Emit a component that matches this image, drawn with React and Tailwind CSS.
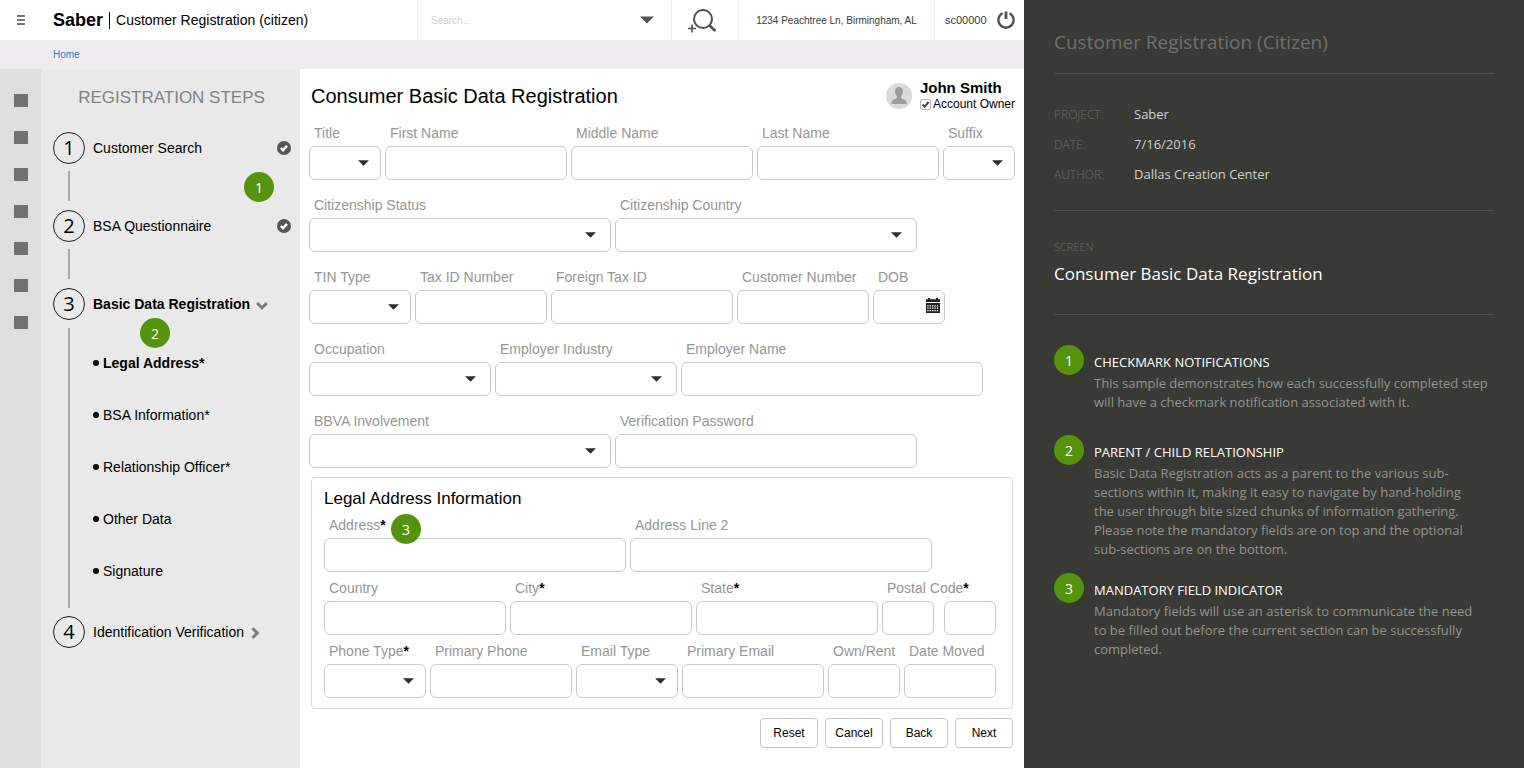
import { useState } from 'react';
import clsx from 'clsx';

function Caret({ className }) {
  return (
    <svg viewBox="0 0 12 6" className={clsx('pointer-events-none', className)} fill="currentColor" aria-hidden="true">
      <path d="M0 0h12L6 6z" />
    </svg>
  );
}

function Badge({ n, className }) {
  return (
    <span className={clsx('flex size-[30px] shrink-0 items-center justify-center rounded-full bg-[#55930d] pt-[2px] font-["Open_Sans",sans-serif] text-[14px] leading-none text-white', className)}>
      {n}
    </span>
  );
}

const boxClass = 'block h-[34px] w-full rounded-md border border-[#c9c9c9] bg-white px-2 text-sm text-gray-700 focus:outline-none focus:ring-1 focus:ring-gray-400';

function Field({ id, label, width, required, children }) {
  return (
    <div className={clsx('relative', width)}>
      <label htmlFor={id} className="mb-[3px] block pl-[5px] text-[14px] leading-5 whitespace-nowrap text-[#969696]">
        {label}{required && <span className="font-bold text-black">*</span>}
      </label>
      {children || <input id={id} type="text" className={boxClass} />}
    </div>
  );
}

function SelectField({ id, label, width, required, wide }) {
  return (
    <Field id={id} label={label} width={width} required={required}>
      <div className="relative">
        <select id={id} className={clsx(boxClass, 'appearance-none')}>
          <option value=""></option>
        </select>
        <Caret className={clsx('absolute top-[14px] h-[6px] w-[11px] text-[#2f2f2f]', wide ? 'right-[15px]' : 'right-3')} />
      </div>
    </Field>
  );
}

function Header() {
  return (
    <header className="flex h-10 items-stretch bg-white">
      <div className="flex w-[418px] items-center border-r border-[#ececec]">
        <button type="button" aria-label="Menu" className="ml-4 flex w-[10px] flex-col gap-[2px] px-px">
          <span className="h-[2px] bg-[#777]" />
          <span className="h-[2px] bg-[#777]" />
          <span className="h-[2px] bg-[#777]" />
        </button>
        <span className="ml-[27px] text-[18px] font-bold text-black">Saber</span>
        <span className="mx-[6px] h-[17px] w-px bg-black" />
        <span className="text-[14px] whitespace-nowrap text-black">Customer Registration (citizen)</span>
      </div>
      <div className="flex flex-1 items-center border-r border-[#ececec] pr-[17px] pl-[13px]">
        <input type="search" aria-label="Search" placeholder="Search..." className="min-w-0 flex-1 bg-transparent text-[10px] placeholder:text-[#cfcfcf] focus:outline-none" />
        <button type="button" aria-label="Search options"><Caret className="h-2 w-[14px] text-[#555]" /></button>
      </div>
      <button type="button" aria-label="Add search" className="flex w-[67px] items-center justify-center border-r border-[#ececec] pr-[6px]">
        <svg viewBox="0 0 30 26" className="h-[26px] w-[30px]" fill="none" stroke="#4f4f4f" aria-hidden="true">
          <circle cx="16" cy="12" r="9" strokeWidth="2" />
          <path d="M22.500 18.500l6 5.500" strokeWidth="2.600" />
          <path d="M1 21.500h8M5 17.500v8" strokeWidth="1.600" />
        </svg>
      </button>
      <div className="flex w-[196px] items-center justify-center border-r border-[#ececec] text-[10px] whitespace-nowrap text-[#3c3c3c]">
        1234 Peachtree Ln, Birmingham, AL
      </div>
      <div className="flex w-[89px] items-center justify-between pr-[9px] pl-[10px] text-[11px] text-[#3c3c3c]">
        sc00000
        <button type="button" aria-label="Log out">
          <svg viewBox="0 0 18 18" className="size-[18px]" fill="none" stroke="#505050" aria-hidden="true">
            <path d="M5.600 2.300A7.600 7.600 0 1 0 12.400 2.300" strokeWidth="2.400" />
            <path d="M9 .5v7.500" strokeWidth="2.800" />
          </svg>
        </button>
      </div>
    </header>
  );
}

function CheckCircle() {
  return (
    <svg viewBox="0 0 14 14" className="size-[14px]" role="img" aria-label="Completed">
      <circle cx="7" cy="7" r="7" fill="#555" />
      <path d="M3.900 7l2.100 2.200 4-4.300" fill="none" stroke="#fff" strokeWidth="2.400" />
    </svg>
  );
}

function StepHead({ n, label, active, done, chevron }) {
  return (
    <div className="flex h-8 items-center">
      <span className="flex size-8 items-center justify-center rounded-full border border-[#222] font-['Open_Sans',sans-serif] text-[20px] leading-none text-black">{n}</span>
      <a href="#" className={clsx('ml-2 text-[14px] text-black', active && 'font-bold')}>{label}</a>
      {chevron && (
        <svg viewBox="0 0 12 12" className="mt-px ml-[6px] size-3" fill="none" stroke="#7d7d7d" strokeWidth="3" aria-hidden="true">
          {chevron === 'down' ? <path d="M1.200 4L6 8.800 10.800 4" /> : <path d="M2.500 1.200L7.300 6l-4.800 4.800" />}
        </svg>
      )}
      {done && <span className="ml-auto"><CheckCircle /></span>}
    </div>
  );
}

const subSteps = [
  { label: 'Legal Address*', active: true },
  { label: 'BSA Information*' },
  { label: 'Relationship Officer*' },
  { label: 'Other Data' },
  { label: 'Signature' },
];

function Connector() {
  return <div className="mt-[7px] mb-[9px] ml-[15px] h-[30px] w-[2px] bg-[#a9a9a9]" />;
}

function Steps() {
  return (
    <nav className="w-[259px] shrink-0 bg-[#e9e9e9] pr-[9px] pl-3">
      <h2 className="mt-[17px] pr-px text-center text-[17px] leading-6 text-[#828282]">REGISTRATION STEPS</h2>
      <ol className="mt-[22px]">
        <li className="relative">
          <StepHead n={1} label="Customer Search" done />
          <Connector />
          <Badge n={1} className="absolute top-10 right-[17px]" />
        </li>
        <li>
          <StepHead n={2} label="BSA Questionnaire" done />
          <Connector />
        </li>
        <li className="relative">
          <StepHead n={3} label="Basic Data Registration" active chevron="down" />
          <Badge n={2} className="absolute top-[30px] left-[87px]" />
          <div className="mt-2 mb-2 ml-[15px] flex h-[280px]">
            <div className="w-[2px] bg-[#a9a9a9]" />
            <ul className="pt-[9px] pl-[23px]">
              {subSteps.map(s => (
                <li key={s.label} className="flex h-[52px] items-center">
                  <span className="size-[6px] rounded-full bg-black" />
                  <a href="#" className={clsx('ml-1 text-[14px] text-black', s.active && 'font-bold')}>{s.label}</a>
                </li>
              ))}
            </ul>
          </div>
        </li>
        <li><StepHead n={4} label="Identification Verification" chevron="right" /></li>
      </ol>
    </nav>
  );
}

function CalendarIcon() {
  return (
    <svg viewBox="0 0 14 15" className="pointer-events-none absolute top-2 right-[5px] h-[15px] w-[14px]" aria-hidden="true">
      <path d="M0 1.200h2V0h2v1.200h6V0h2v1.200h2V4H0zM0 5h14v10H0z" fill="#222" />
      <path d="M1.200 7.800h12M1.200 10.200h12M1.200 12.600h12" stroke="#fff" strokeWidth="1.300" strokeDasharray="1.400 1" />
    </svg>
  );
}

function UserCard() {
  const [owner, setOwner] = useState(true);

  return (
    <div className="flex items-center">
      <svg viewBox="0 0 26 26" className="size-[26px]" role="img" aria-label="John Smith">
        <circle cx="13" cy="13" r="13" fill="#dadada" />
        <path d="M13 4c2.600 0 4 1.800 4 4.500 0 1.800-.7 3.500-1.700 4.400v2.300c1.700 1 5.200 1.300 5.200 4.300V21h-15v-1.500c0-3 3.500-3.300 5.200-4.300v-2.300C9.700 12 9 10.300 9 8.500 9 5.800 10.400 4 13 4z" fill="#9c9c9c" />
      </svg>
      <div className="ml-2">
        <p className="text-[15px] leading-4 font-bold text-black">John Smith</p>
        <label className="flex items-center gap-[2px] text-[12px] leading-4 text-black">
          <span className="relative size-[11px]">
            <input type="checkbox" checked={owner} onChange={e => setOwner(e.target.checked)}
              className="block size-[11px] appearance-none rounded-xs border border-[#b5b5b5] bg-white" />
            {owner && (
              <svg viewBox="0 0 11 11" className="pointer-events-none absolute inset-0" fill="none" stroke="#444" strokeWidth="2" aria-hidden="true">
                <path d="M2.500 5.500l2.200 2.300L8.600 3" />
              </svg>
            )}
          </span>
          Account Owner
        </label>
      </div>
    </div>
  );
}

function LegalAddress() {
  return (
    <section className="mt-[9px] mr-[2px] ml-[2px] rounded-sm border border-[#dadada] pt-[9px] pb-[10px] pl-3">
      <h2 className="text-[17px] leading-6 text-black">Legal Address Information</h2>
      <div className="mt-1 flex flex-col gap-[6px]">
        <div className="relative flex gap-1">
          <Field id="address" label="Address" width="w-[302px]" required />
          <Field id="address2" label="Address Line 2" width="w-[302px]" />
          <Badge n={3} className="absolute -top-px left-[67px]" />
        </div>
        <div className="flex gap-1">
          <Field id="country" label="Country" width="w-[182px]" />
          <Field id="city" label="City" width="w-[182px]" required />
          <Field id="state" label="State" width="w-[182px]" required />
          <Field id="postal" label="Postal Code" width="w-[114px]" required>
            <div className="flex gap-[10px]">
              <input id="postal" type="text" className={boxClass} />
              <input type="text" aria-label="Postal Code extension" className={boxClass} />
            </div>
          </Field>
        </div>
        <div className="flex gap-1">
          <SelectField id="phoneType" label="Phone Type" width="w-[102px]" required />
          <Field id="phone" label="Primary Phone" width="w-[142px]" />
          <SelectField id="emailType" label="Email Type" width="w-[102px]" />
          <Field id="email" label="Primary Email" width="w-[142px]" />
          <Field id="ownRent" label="Own/Rent" width="w-[72px]" />
          <Field id="dateMoved" label="Date Moved" width="w-[92px]" />
        </div>
      </div>
    </section>
  );
}

function RegistrationForm() {
  return (
    <main className="min-w-0 flex-1 bg-white pr-[9px] pb-5 pl-[9px]">
      <div className="flex h-[54px] items-center justify-between pl-[2px]">
        <h1 className="text-[20px] text-black">Consumer Basic Data Registration</h1>
        <UserCard />
      </div>
      <form onSubmit={e => e.preventDefault()}>
        <div className="flex flex-col gap-[15px]">
          <div className="flex gap-1">
            <SelectField id="title" label="Title" width="w-[72px]" />
            <Field id="firstName" label="First Name" width="w-[182px]" />
            <Field id="middleName" label="Middle Name" width="w-[182px]" />
            <Field id="lastName" label="Last Name" width="w-[182px]" />
            <SelectField id="suffix" label="Suffix" width="w-[72px]" />
          </div>
          <div className="flex gap-1">
            <SelectField id="citStatus" label="Citizenship Status" width="w-[302px]" wide />
            <SelectField id="citCountry" label="Citizenship Country" width="w-[302px]" wide />
          </div>
          <div className="flex gap-1">
            <SelectField id="tinType" label="TIN Type" width="w-[102px]" />
            <Field id="taxId" label="Tax ID Number" width="w-[132px]" />
            <Field id="foreignTaxId" label="Foreign Tax ID" width="w-[182px]" />
            <Field id="customerNo" label="Customer Number" width="w-[132px]" />
            <Field id="dob" label="DOB" width="w-[72px]">
              <div className="relative">
                <input id="dob" type="text" className={boxClass} />
                <CalendarIcon />
              </div>
            </Field>
          </div>
          <div className="flex gap-1">
            <SelectField id="occupation" label="Occupation" width="w-[182px]" wide />
            <SelectField id="industry" label="Employer Industry" width="w-[182px]" wide />
            <Field id="employer" label="Employer Name" width="w-[302px]" />
          </div>
          <div className="flex gap-1">
            <SelectField id="involvement" label="BBVA Involvement" width="w-[302px]" wide />
            <Field id="password" label="Verification Password" width="w-[302px]" />
          </div>
        </div>
        <LegalAddress />
        <div className="mt-[9px] mr-[2px] flex justify-end gap-[7px]">
          {['Reset', 'Cancel', 'Back', 'Next'].map(b => (
            <button key={b} type="button" className="h-[30px] w-[58px] rounded-sm border border-[#c4c4c4] bg-white text-[12px] text-black">{b}</button>
          ))}
        </div>
      </form>
    </main>
  );
}

const details = [
  ['PROJECT:', 'Saber'],
  ['DATE:', '7/16/2016'],
  ['AUTHOR:', 'Dallas Creation Center'],
];

const notes = [
  {
    title: 'CHECKMARK NOTIFICATIONS',
    text: 'This sample demonstrates how each successfully completed step\nwill have a checkmark notification associated with it.',
  },
  {
    title: 'PARENT / CHILD RELATIONSHIP',
    text: 'Basic Data Registration acts as a parent to the various sub-\nsections within it, making it easy to navigate by hand-holding\nthe user through bite sized chunks of information gathering.\nPlease note the mandatory fields are on top and the optional\nsub-sections are on the bottom.',
  },
  {
    title: 'MANDATORY FIELD INDICATOR',
    text: 'Mandatory fields will use an asterisk to communicate the need\nto be filled out before the current section can be successfully\ncompleted.',
  },
];

function NotesPanel() {
  return (
    <aside className="w-[500px] shrink-0 bg-[#393a35] px-[30px] font-['Open_Sans',sans-serif]">
      <h2 className="pt-7 pb-[17px] text-[19px] leading-7 text-[#6f706d]">Customer Registration (Citizen)</h2>
      <dl className="border-y border-[#50514c] pt-[26px] pb-5">
        {details.map(([k, v]) => (
          <div key={k} className="flex h-[30px] items-center">
            <dt className="w-20 text-[12px] font-light text-[#6a6b67]">{k}</dt>
            <dd className="text-[13px] text-[#cfcfcd]">{v}</dd>
          </div>
        ))}
      </dl>
      <div className="border-b border-[#50514c] pt-[28px] pb-[27px]">
        <p className="text-[11px] leading-4 font-light text-[#6a6b67]">SCREEN</p>
        <p className="mt-[6px] text-[17px] leading-[26px] text-white">Consumer Basic Data Registration</p>
      </div>
      <ol className="mt-[30px] flex flex-col gap-[14px]">
        {notes.map((n, i) => (
          <li key={n.title} className="flex min-h-[76px] gap-[10px]">
            <Badge n={i + 1} />
            <div className="pt-2">
              <h3 className="text-[13px] leading-[19px] text-white">{n.title}</h3>
              <p className="mt-[2px] text-[13px] leading-[19px] whitespace-pre-line text-[#93948f]">{n.text}</p>
            </div>
          </li>
        ))}
      </ol>
    </aside>
  );
}

export default function App() {
  return (
    <div className="flex min-h-screen font-['Liberation_Sans',Arial,sans-serif]">
      <div className="flex min-w-0 flex-1 flex-col bg-white">
        <Header />
        <div className="flex h-[29px] items-center bg-[#eeecee] pl-[53px]">
          <a href="#" className="text-[10px] text-[#2f7ed0]">Home</a>
        </div>
        <div className="flex flex-1">
          <div className="flex w-[41px] shrink-0 flex-col items-center gap-6 bg-[#dfdfdf] pt-[25px]">
            {[1, 2, 3, 4, 5, 6, 7].map(i => <span key={i} className="h-[13px] w-[14px] bg-[#717171]" />)}
          </div>
          <Steps />
          <RegistrationForm />
        </div>
      </div>
      <NotesPanel />
    </div>
  );
}
